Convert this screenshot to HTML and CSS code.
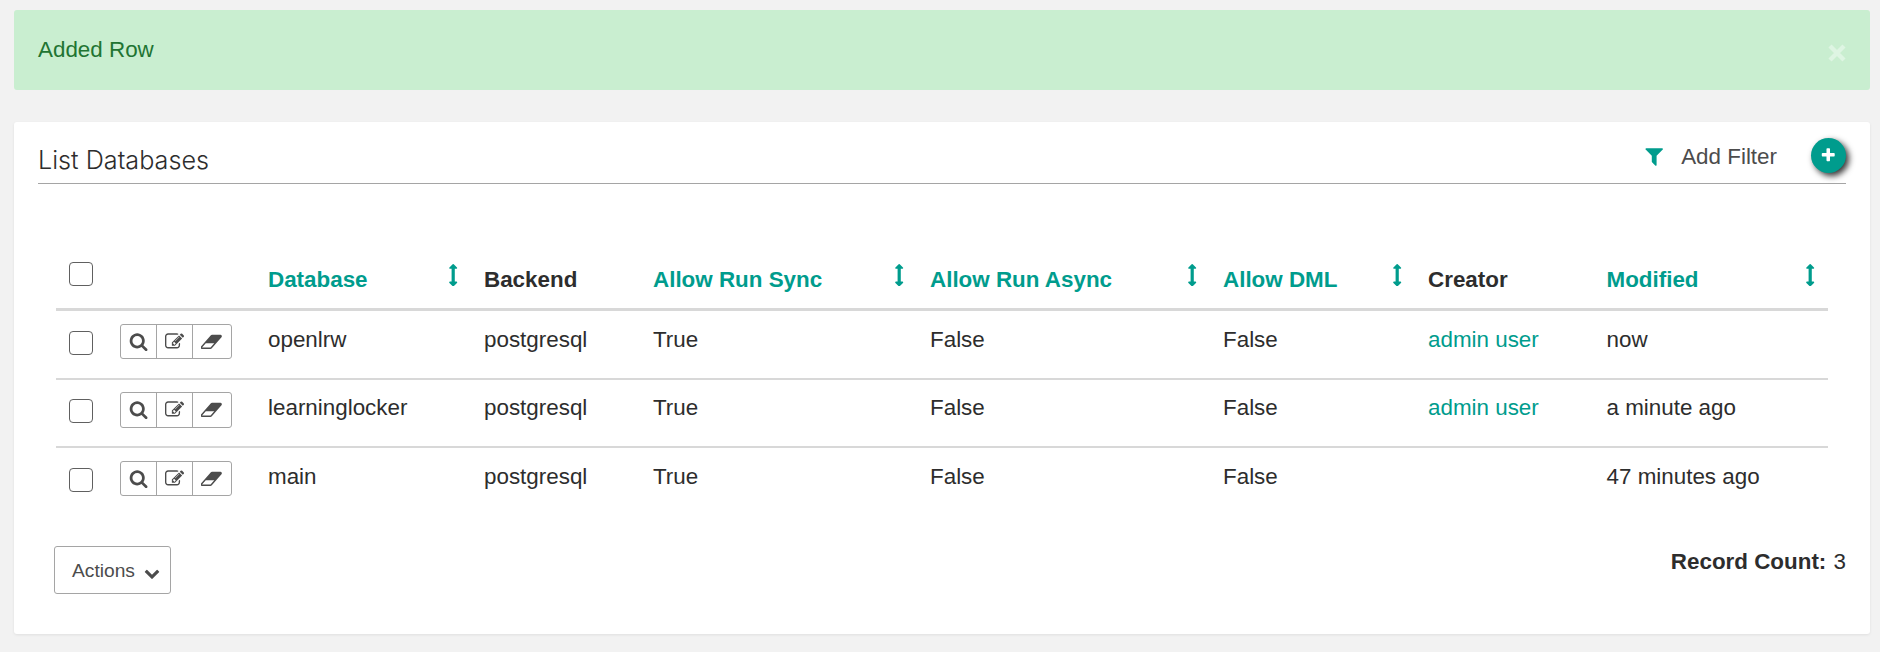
FILE: index.html
```html
<!DOCTYPE html>
<html lang="en">
<head>
<meta charset="utf-8">
<title>List Databases</title>
<link rel="stylesheet" href="styles.css">
</head>
<body>
<svg class="sprite" aria-hidden="true">
  <symbol id="search" viewBox="0 0 1792 1792"><path d="M1216 832q0-185-131.500-316.500t-316.500-131.500-316.500 131.500-131.500 316.500 131.500 316.500 316.500 131.500 316.500-131.500 131.500-316.500zm512 832q0 52-38 90t-90 38q-54 0-90-38l-343-342q-179 124-399 124-143 0-273.500-55.500t-225-150-150-225-55.500-273.500 55.500-273.500 150-225 225-150 273.500-55.500 273.500 55.500 225 150 150 225 55.500 273.500q0 220-124 399l343 343q37 37 37 90z"/></symbol>
  <symbol id="edit" viewBox="0 0 1792 1792"><path d="M888 1184l116-116-152-152-116 116v56h96v96h56zm440-720q-16-16-33 1l-350 350q-17 17-1 33t33-1l350-350q17-17 1-33zm80 594v190q0 119-84.500 203.500t-203.500 84.500h-832q-119 0-203.500-84.500t-84.500-203.500v-832q0-119 84.500-203.500t203.500-84.500h832q63 0 117 25 15 7 18 23 3 17-9 29l-49 49q-14 14-32 8-23-6-45-6h-832q-66 0-113 47t-47 113v832q0 66 47 113t113 47h832q66 0 113-47t47-113v-126q0-13 9-22l64-64q15-15 35-7t20 29zm-96-738l288 288-672 672h-288v-288zm444 132l-92 92-288-288 92-92q28-28 68-28t68 28l152 152q28 28 28 68t-28 68z"/></symbol>
  <symbol id="eraser" viewBox="0 0 1920 1792"><path d="M832 1408l336-384h-768l-336 384h768zm1013-1077q15 34 9.500 71.500t-30.500 65.500l-896 1024q-38 44-96 44h-768q-38 0-69.500-20.500t-47.500-54.500q-15-34-9.500-71.500t30.500-65.500l896-1024q38-44 96-44h768q38 0 69.500 20.500t47.500 54.500z" transform="translate(32)"/></symbol>
  <symbol id="filter" viewBox="0 0 1792 1792"><path d="M1595 295q17 41-14 70l-493 493v742q0 42-39 59-13 5-25 5-27 0-45-19l-256-256q-19-19-19-45v-486l-493-493q-31-29-14-70 17-39 59-39h1280q42 0 59 39z"/></symbol>
  <symbol id="plus" viewBox="0 0 1792 1792"><path d="M1600 736v192q0 40-28 68t-68 28h-416v416q0 40-28 68t-68 28h-192q-40 0-68-28t-28-68v-416h-416q-40 0-68-28t-28-68v-192q0-40 28-68t68-28h416v-416q0-40 28-68t68-28h192q40 0 68 28t28 68v416h416q40 0 68 28t28 68z"/></symbol>
  <symbol id="sort" viewBox="0 0 1792 1792"><path d="M1216 320q0 26-19 45t-45 19h-128v1024h128q26 0 45 19t19 45-19 45l-256 256q-19 19-45 19t-45-19l-256-256q-19-19-19-45t19-45 45-19h128v-1024h-128q-26 0-45-19t-19-45 19-45l256-256q19-19 45-19t45 19l256 256q19 19 19 45z"/></symbol>
  <symbol id="chevron" viewBox="0 0 1792 1792"><path d="M1683 808l-742 741q-19 19-45 19t-45-19l-742-741q-19-19-19-45.500t19-45.500l166-165q19-19 45-19t45 19l531 531 531-531q19-19 45-19t45 19l166 165q19 19 19 45.500t-19 45.500z"/></symbol>
</svg>

<div class="alert">
  <span>Added Row</span>
  <svg class="alert-close" viewBox="0 0 18 18"><path d="M2 2L16 16M16 2L2 16"/></svg>
</div>

<main class="panel">
  <header class="panel-header">
    <h1>List Databases</h1>
    <div class="tools">
      <svg class="filter-icon"><use href="#filter"/></svg>
      <span class="filter-label">Add Filter</span>
      <a class="add"><svg><use href="#plus"/></svg></a>
    </div>
  </header>

  <table class="list">
    <colgroup>
      <col class="c-check"><col class="c-tools"><col class="c-database"><col class="c-backend"><col class="c-sync"><col class="c-async"><col class="c-dml"><col class="c-creator"><col>
    </colgroup>
    <thead>
      <tr>
        <th><span class="box"></span></th>
        <th></th>
        <th><a class="sortable"><span>Database</span><svg><use href="#sort"/></svg></a></th>
        <th>Backend</th>
        <th><a class="sortable"><span>Allow Run Sync</span><svg><use href="#sort"/></svg></a></th>
        <th><a class="sortable"><span>Allow Run Async</span><svg><use href="#sort"/></svg></a></th>
        <th><a class="sortable"><span>Allow DML</span><svg><use href="#sort"/></svg></a></th>
        <th>Creator</th>
        <th><a class="sortable"><span>Modified</span><svg><use href="#sort"/></svg></a></th>
      </tr>
    </thead>
    <tbody>
      <tr>
        <td><span class="box"></span></td>
        <td><div class="group"><a><svg><use href="#search"/></svg></a><a><svg><use href="#edit"/></svg></a><a><svg class="wide"><use href="#eraser"/></svg></a></div></td>
        <td>openlrw</td><td>postgresql</td><td>True</td><td>False</td><td>False</td><td><a class="link">admin user</a></td><td>now</td>
      </tr>
      <tr>
        <td><span class="box"></span></td>
        <td><div class="group"><a><svg><use href="#search"/></svg></a><a><svg><use href="#edit"/></svg></a><a><svg class="wide"><use href="#eraser"/></svg></a></div></td>
        <td>learninglocker</td><td>postgresql</td><td>True</td><td>False</td><td>False</td><td><a class="link">admin user</a></td><td>a minute ago</td>
      </tr>
      <tr>
        <td><span class="box"></span></td>
        <td><div class="group"><a><svg><use href="#search"/></svg></a><a><svg><use href="#edit"/></svg></a><a><svg class="wide"><use href="#eraser"/></svg></a></div></td>
        <td>main</td><td>postgresql</td><td>True</td><td>False</td><td>False</td><td></td><td>47 minutes ago</td>
      </tr>
    </tbody>
  </table>

  <footer class="panel-footer">
    <button class="actions" type="button">Actions<svg><use href="#chevron"/></svg></button>
    <div class="count"><strong>Record Count:</strong> <span>3</span></div>
  </footer>
</main>
</body>
</html>
```
FILE: styles.css
```css
* { box-sizing: border-box; }

body {
  margin: 0;
  padding: 10px 10px 18px 14px;
  height: 652px;
  background: #f2f2f2;
  color: #2d2d2d;
  font: 22.4px/30px "Liberation Sans", Arial, sans-serif;
}

svg { display: block; fill: currentColor; flex: none; }
.sprite { display: none; }

.alert {
  display: flex;
  justify-content: space-between;
  height: 80px;
  margin-bottom: 32px;
  padding: 25px 24px 0;
  border-radius: 3px;
  background: #c9eed0;
  color: #217432;
}
.alert-close {
  width: 18px;
  height: 18px;
  margin-top: 9px;
  fill: none;
  stroke: #fff;
  stroke-opacity: .4;
  stroke-width: 4.4;
}

.panel {
  height: 512px;
  padding: 0 24px;
  border-radius: 3px;
  background: #fff;
  box-shadow: 0 1px 3px rgba(0, 0, 0, .08);
}
.panel-header {
  display: flex;
  justify-content: space-between;
  height: 62px;
  border-bottom: 1px solid #a5a5a5;
}
h1 {
  margin: 22px 0 0;
  font: 300 25.2px/32px Inter, "Liberation Sans", sans-serif;
}
.tools { display: flex; padding-top: 16px; color: #4c4c4c; }
.filter-icon { width: 22.4px; height: 22.4px; margin: 7px 15.5px 0 0; color: #009c8d; }
.filter-label { padding-top: 4px; }
.add {
  display: grid;
  place-items: center;
  width: 35px;
  height: 35px;
  margin-left: 34px;
  border-radius: 50%;
  background: #009c8d;
  color: #fff;
  box-shadow: 3px 3px 6px rgba(0, 0, 0, .8);
}
.add svg { width: 16.5px; height: 16.5px; margin-bottom: 1px; }

.list {
  width: 1772px;
  margin: 57px 0 0 18px;
  border-collapse: separate;
  border-spacing: 0;
  table-layout: fixed;
}
.c-check { width: 52px; }
.c-tools { width: 148px; }
.c-database { width: 216px; }
.c-backend { width: 169px; }
.c-sync { width: 277px; }
.c-async { width: 293px; }
.c-dml { width: 205px; }
.c-creator { width: 178.5px; }

th, td { padding: 0 12px; text-align: left; vertical-align: top; white-space: nowrap; }
th { height: 70px; padding-top: 24px; border-bottom: 3px solid #d8d8d8; }
td { height: 69px; padding-top: 14px; border-bottom: 2px solid #d8d8d8; }
tbody tr + tr td { height: 68px; }
tbody tr:nth-child(2) td { padding-top: 13px; }
tbody tr:last-child td { border-bottom: 0; }

.sortable { display: flex; justify-content: space-between; color: #009c8d; }
.sortable svg { width: 22.4px; height: 22.4px; margin: -1px -4.5px 0 0; }
th:last-child svg { margin-right: -5px; }
.link { color: #009c8d; }

.box {
  display: block;
  width: 24px;
  height: 24px;
  margin: 6px 0 0 1px;
  border: 1.5px solid #606060;
  border-radius: 4px;
}
th .box { margin-top: -3px; }

.group {
  display: flex;
  width: 112px;
  height: 35px;
  margin-top: -1px;
  border: 1px solid #a5a5a5;
  border-radius: 3px;
  color: #4c4c4c;
}
tr:nth-child(2) .group { height: 36px; }
.group a { display: grid; place-items: center; width: 36px; }
.group a:first-child { width: 35px; }
.group a + a { border-left: 1px solid #a5a5a5; }
.group a:last-child { width: 39px; }
.group svg { width: 19.2px; height: 19.2px; }
.group .wide { width: 21.2px; height: 19.8px; }

.panel-footer { display: flex; justify-content: space-between; margin-top: 30px; }
.actions {
  display: flex;
  width: 117px;
  height: 48px;
  margin-left: 16px;
  padding: 9px 0 0 17px;
  border: 1px solid #a5a5a5;
  border-radius: 3px;
  background: #fff;
  color: #4c4c4c;
  font: 19.2px/30px "Liberation Sans", Arial, sans-serif;
}
.actions svg { width: 16px; height: 16px; margin: 9px 0 0 9px; }
.count { padding-top: 1px; }
.count span { margin-left: 1px; }
```
